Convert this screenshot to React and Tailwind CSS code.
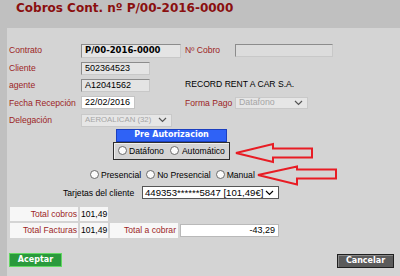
import React from "react";

const Chevron = ({ className = "" }) => (
  <svg width="9" height="6" viewBox="0 0 9 6" className={`shrink-0 ${className}`}>
    <polyline points="1,1 4.5,4.5 8,1" fill="none" stroke="currentColor" strokeWidth="1.2" />
  </svg>
);

const Radio = () => (
  <span className="inline-block w-[9px] h-[9px] rounded-full border border-[#6b6b6b] bg-[#fbfbfb] shrink-0" />
);

const Row = ({ children }) => <div className="flex items-center h-[17.4px]">{children}</div>;

const Label = ({ children, className = "" }) => (
  <span className={`text-[#9c1f1f] whitespace-nowrap ${className}`}>{children}</span>
);

const ReadOnly = ({ className = "", children }) => (
  <div
    className={`bg-[#e4e4e4] border border-[#8c8c8c] border-b-[#c8c8c8] border-r-[#c8c8c8] flex items-center pl-[3px] text-[9px] ${className}`}
  >
    {children}
  </div>
);

const Disabled = ({ className = "", children }) => (
  <div
    className={`bg-[#e6e6e6] border border-[#c9c9c9] flex items-center justify-between pl-[3px] pr-[4px] text-[#a5a5a5] overflow-hidden ${className}`}
  >
    <span className="whitespace-nowrap">{children}</span>
    <Chevron className="text-[#555]" />
  </div>
);

export default function App() {
  return (
    <div className="w-[400px] h-[276px] relative overflow-hidden bg-[#c0c0c0] font-['Liberation_Sans',Arial,sans-serif] text-[8.6px] leading-none text-black">
      {/* cabecera */}
      <div className="h-[28px] pl-[16px] pt-[1px]">
        <h1 className="font-['DejaVu_Sans',Verdana,sans-serif] font-bold text-[12px] leading-[14px] text-[#8a0f0f]">
          Cobros Cont. nº P/00-2016-0000
        </h1>
      </div>

      <div className="ml-[7px] h-[248px] bg-[#d4d4d4] pt-[14px] pl-[2px] pr-[6px]">
        <Row>
          <Label className="w-[72px]">Contrato</Label>
          <ReadOnly className="w-[100px] h-[14px] font-['DejaVu_Sans',Verdana,sans-serif] font-bold !text-[8.5px]">
            P/00-2016-0000
          </ReadOnly>
          <Label className="ml-[4px] w-[50px]">Nº Cobro</Label>
          <ReadOnly className="w-[98px] h-[13px] !bg-[#dcdcdc]" />
        </Row>
        <Row>
          <Label className="w-[72px]">Cliente</Label>
          <ReadOnly className="w-[69px] h-[13px]">502364523</ReadOnly>
        </Row>
        <Row>
          <Label className="w-[72px]">agente</Label>
          <ReadOnly className="w-[69px] h-[13px]">A12041562</ReadOnly>
          <span className="ml-[35px] -mt-[2px]">RECORD RENT A CAR S.A.</span>
        </Row>
        <Row>
          <Label className="w-[72px]">Fecha Recepción</Label>
          <div className="w-[54px] h-[13px] bg-white border border-[#c4c4c4] flex items-center pl-[3px] text-[9px]">
            22/02/2016
          </div>
          <Label className="ml-[50px] w-[50px]">Forma Pago</Label>
          <Disabled className="w-[73px] h-[12px] text-[8.8px]">Datafono</Disabled>
        </Row>
        <Row>
          <Label className="w-[72px]">Delegación</Label>
          <Disabled className="w-[91px] h-[13px] text-[7.8px]">AEROALICAN (32)</Disabled>
        </Row>

        {/* pre autorizacion */}
        <div className="ml-[104px] w-[117px] flex flex-col">
          <div className="mx-[3px] h-[13px] bg-[#2f62f6] border border-[#1b3fbf] flex items-center justify-center text-white font-bold font-['DejaVu_Sans',Verdana,sans-serif] text-[8px]">
            Pre Autorizacion
          </div>
          <div className="h-[18px] border border-[#2e2e2e] shadow-[inset_1px_1px_0_#efefef] flex items-center pl-[4px]">
            <Radio />
            <span className="ml-[2px]">Datáfono</span>
            <span className="ml-[6px] flex">
              <Radio />
            </span>
            <span className="ml-[3px]">Automático</span>
          </div>
        </div>

        <div className="mt-[8px] h-[14px] flex items-center ml-[81px]">
          <Radio />
          <span className="ml-[2px]">Presencial</span>
          <span className="ml-[5px] flex">
            <Radio />
          </span>
          <span className="ml-[2px]">No Presencial</span>
          <span className="ml-[5px] flex">
            <Radio />
          </span>
          <span className="ml-[2px]">Manual</span>
        </div>

        <div className="mt-[4px] h-[14px] flex items-center ml-[54px]">
          <span className="w-[79px]">Tarjetas del cliente</span>
          <div className="w-[137px] h-[13px] bg-white border border-[#555] flex items-center justify-between pl-[2px] pr-[4px] text-[9.6px]">
            <span className="whitespace-nowrap">449353******5847 [101,49€]</span>
            <Chevron className="text-black" />
          </div>
        </div>

        {/* totales */}
        <div className="mt-[7px] ml-[1px] flex flex-col gap-[2px]">
          <div className="flex gap-[2px] h-[14px]">
            <Label className="w-[68px] bg-[#f7f7f7] flex items-center justify-end pr-[1px]">Total cobros</Label>
            <span className="w-[28px] bg-[#f7f7f7] flex items-center pl-[1px]">101,49</span>
          </div>
          <div className="flex gap-[2px] h-[15px]">
            <Label className="w-[68px] bg-[#f7f7f7] flex items-center justify-end pr-[1px]">Total Facturas</Label>
            <span className="w-[28px] bg-[#f7f7f7] flex items-center pl-[1px]">101,49</span>
            <Label className="w-[68px] bg-[#f7f7f7] flex items-center justify-end pr-[2px]">Total a cobrar</Label>
            <div className="w-[99px] h-[13px] mt-[1px] bg-white border border-[#b9b9b9] flex items-center justify-end pr-[3px] text-[9px]">
              -43,29
            </div>
          </div>
        </div>

        <div className="mt-[15px] flex justify-between items-start">
          <button className="w-[53px] h-[14px] bg-[#2a9a3c] border border-[#62d862] text-white font-bold font-['DejaVu_Sans',Verdana,sans-serif] text-[8px] flex items-center justify-center">
            Aceptar
          </button>
          <button className="mt-[1px] w-[57px] h-[14px] bg-[#5b5b5b] border border-[#1f1f1f] shadow-[inset_1px_1px_0_#8a8a8a] text-white font-bold font-['DejaVu_Sans',Verdana,sans-serif] text-[8px] flex items-center justify-center">
            Cancelar
          </button>
        </div>
      </div>

      {/* flechas de anotación */}
      <svg className="absolute inset-0 pointer-events-none" width="400" height="276" viewBox="0 0 400 276">
        <polygon
          points="236,153 273,144 273,148.5 312,148.5 312,157.5 273,157.5 273,162"
          fill="none"
          stroke="#e81c24"
          strokeWidth="2"
          strokeLinejoin="miter"
        />
        <polygon
          points="258,175 297,166.5 297,169.5 336,169.5 336,178.5 297,178.5 297,184.5"
          fill="none"
          stroke="#e81c24"
          strokeWidth="2"
          strokeLinejoin="miter"
        />
      </svg>
    </div>
  );
}
